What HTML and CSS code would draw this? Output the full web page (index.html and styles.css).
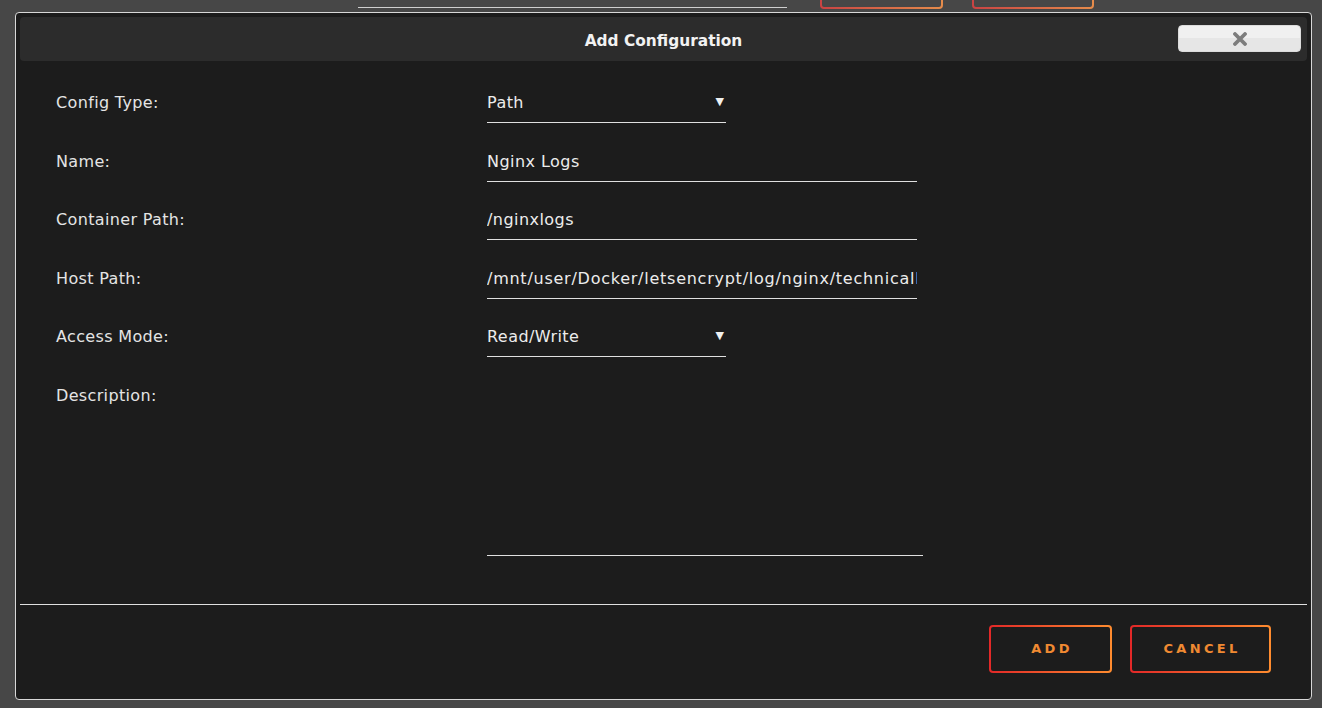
FILE: index.html
```html
<!DOCTYPE html>
<html>
<head>
<meta charset="utf-8">
<link rel="stylesheet" href="styles.css">
</head>
<body>
<div class="bgstrip">
  <div class="bgline"></div>
  <div class="bgbtn bgbtn1"></div>
  <div class="bgbtn bgbtn2"></div>
</div>
<div class="dialog">
  <div class="titlebar">
    <span class="title">Add Configuration</span>
    <button class="close" aria-label="Close">
      <svg class="xicon" width="14" height="14" viewBox="0 0 14 14"><path d="M2 2 L12 12 M12 2 L2 12" stroke="#7d7d7d" stroke-width="3.8" stroke-linecap="round"/></svg>
    </button>
  </div>
  <div class="form">
    <div class="label">Config Type:</div>
    <div class="field select">Path<span class="arrow">▼</span></div>
    <div class="label">Name:</div>
    <div class="field text">Nginx Logs</div>
    <div class="label">Container Path:</div>
    <div class="field text">/nginxlogs</div>
    <div class="label">Host Path:</div>
    <div class="field text long">/mnt/user/Docker/letsencrypt/log/nginx/technicalblog</div>
    <div class="label">Access Mode:</div>
    <div class="field select">Read/Write<span class="arrow">▼</span></div>
    <div class="label">Description:</div>
    <div class="field textarea"></div>
  </div>
  <div class="sep"></div>
  <div class="actions">
    <button class="btn btn-add">ADD</button>
    <button class="btn btn-cancel">CANCEL</button>
  </div>
</div>
</body>
</html>
```
FILE: styles.css
```css
html, body {
  margin: 0;
  padding: 0;
}
body {
  background: #474747;
  font-family: "DejaVu Sans", "Noto Sans", sans-serif;
  color: #e8e8e8;
  width: 1322px;
  height: 708px;
  overflow: hidden;
}
.bgstrip {
  height: 12px;
  display: flex;
  align-items: flex-end;
  overflow: hidden;
}
.bgline {
  margin-left: 358px;
  width: 429px;
  height: 7px;
  border-bottom: 1px solid #cfcfcf;
  margin-bottom: 4px;
}
.bgbtn {
  height: 30px;
  border: 2px solid transparent;
  border-radius: 4px;
  background: linear-gradient(#474747, #474747) padding-box,
              linear-gradient(90deg, #c94343, #e68c4b) border-box;
  margin-bottom: 3px;
  box-sizing: border-box;
}
.bgbtn1 { margin-left: 33px; width: 123px; }
.bgbtn2 { margin-left: 29px; width: 122px; }

.dialog {
  margin-left: 15px;
  width: 1297px;
  height: 688px;
  box-sizing: border-box;
  border: 1px solid #d8d8d8;
  border-radius: 4px;
  background: #1c1c1c;
  padding: 4px;
  display: flex;
  flex-direction: column;
}
.titlebar {
  height: 44px;
  box-sizing: border-box;
  padding-top: 3px;
  background: #2c2c2c;
  border-radius: 4px;
  display: flex;
  align-items: center;
  justify-content: center;
  position: relative;
}
.title {
  font-weight: bold;
  font-size: 15.4px;
  color: #f2f2f2;
}
.close {
  position: absolute;
  right: 6px;
  top: 8px;
  width: 123px;
  height: 27px;
  border: 1px solid #dcdcdc;
  border-radius: 4px;
  background: linear-gradient(#f0f0f0 0%, #f0f0f0 50%, #e6e6e6 50%, #e6e6e6 100%);
  padding: 0;
  display: flex;
  align-items: center;
  justify-content: center;
}
.xicon { display: block; }
.form {
  display: grid;
  grid-template-columns: 431px 1fr;
  row-gap: 20.5px;
  padding: 24px 0 0 36px;
  align-items: start;
}
.label {
  font-size: 16px;
  line-height: 35px;
  letter-spacing: 0.35px;
  color: #e4e4e4;
}
.field {
  font-size: 16px;
  line-height: 35px;
  letter-spacing: 0.45px;
  height: 34px;
  padding-bottom: 3px;
  border-bottom: 1px solid #e0e0e0;
  color: #ececec;
  white-space: nowrap;
  overflow: hidden;
  position: relative;
}
.field.long { letter-spacing: 0.75px; }
.field.text { width: 430px; }
.field.select { width: 239px; }
.field.textarea { width: 436px; height: 174px; }
.arrow {
  position: absolute;
  right: 2px;
  top: -1px;
  font-size: 11px;
  letter-spacing: 0;
  color: #f0f0f0;
}
.sep {
  margin-top: 48px;
  height: 1px;
  background: #e0e0e0;
}
.actions {
  display: flex;
  justify-content: flex-end;
  gap: 18px;
  padding: 20px 36px 0 0;
}
.btn {
  height: 48px;
  box-sizing: border-box;
  border: 2px solid transparent;
  border-radius: 4px;
  background: linear-gradient(#1c1c1c, #1c1c1c) padding-box,
              linear-gradient(90deg, #e22828, #ff8c2f) border-box;
  color: #f08a32;
  font-family: "DejaVu Sans", "Noto Sans", sans-serif;
  font-weight: bold;
  font-size: 13px;
  letter-spacing: 3.3px;
  padding: 0 0 0 3px;
}
.btn-add { width: 123px; }
.btn-cancel { width: 141px; }
```
